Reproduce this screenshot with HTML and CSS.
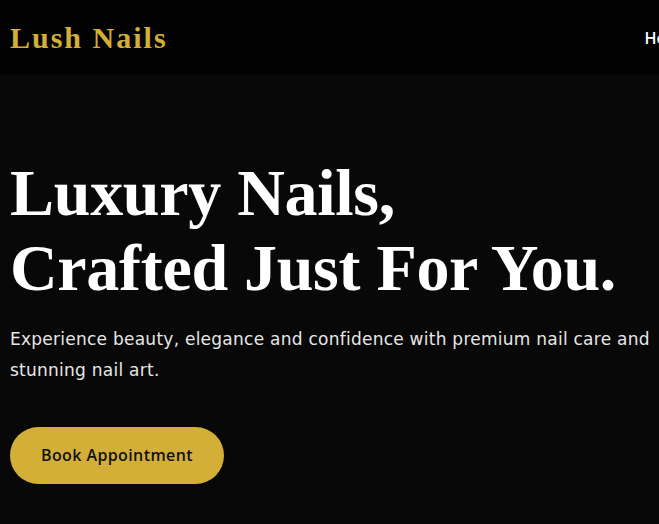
FILE: index.html
```html
<!DOCTYPE html>
<html lang="en">
<head>
<meta charset="utf-8">
<title>Lush Nails</title>
<link rel="stylesheet" href="styles.css">
</head>
<body>
<header class="site-header">
  <a class="logo" href="#">Lush Nails</a>
  <nav class="nav">
    <a href="#">Home</a>
    <a href="#">Services</a>
    <a href="#">Gallery</a>
    <a href="#">Contact</a>
  </nav>
</header>
<section class="hero">
  <h1 class="hero-title">Luxury Nails,<br>Crafted Just For You.</h1>
  <p class="hero-text">Experience beauty, elegance and confidence with premium nail care and stunning nail art.</p>
  <a class="btn" href="#">Book Appointment</a>
</section>
</body>
</html>
```

FILE: styles.css
```css
html, body {
  margin: 0;
  padding: 0;
  overflow: hidden;
  background: #080808;
}
body {
  font-family: "Open Sans", "Noto Sans", sans-serif;
  width: 659px;
  height: 524px;
}
.site-header {
  display: flex;
  align-items: center;
  gap: 477px;
  height: 75px;
  padding: 0 10px;
  background: #020202;
  white-space: nowrap;
}
.logo {
  font-family: "Liberation Serif", serif;
  font-weight: 700;
  font-size: 30px;
  letter-spacing: 2px;
  color: #d4af37;
  text-decoration: none;
  line-height: 1;
}
.nav {
  display: flex;
  gap: 28px;
}
.nav a {
  color: #ffffff;
  text-decoration: none;
  font-weight: 600;
  font-size: 16px;
}
.hero {
  padding: 80px 0 0 10px;
}
.hero-title {
  margin: 0;
  font-family: "Liberation Serif", serif;
  font-weight: 700;
  font-size: 66px;
  line-height: 75px;
  letter-spacing: -0.3px;
  color: #ffffff;
}
.hero-text {
  margin: 19px 0 0;
  width: 649px;
  font-family: "DejaVu Sans", "Open Sans", sans-serif;
  font-size: 17px;
  letter-spacing: 0.25px;
  line-height: 31px;
  color: #e6e6e6;
}
.btn {
  display: inline-block;
  margin-top: 41px;
  height: 57px;
  line-height: 57px;
  padding: 0 31px;
  border-radius: 999px;
  background: #d4af37;
  color: #111111;
  font-weight: 600;
  font-size: 16px;
  letter-spacing: 0.4px;
  text-decoration: none;
}
```
